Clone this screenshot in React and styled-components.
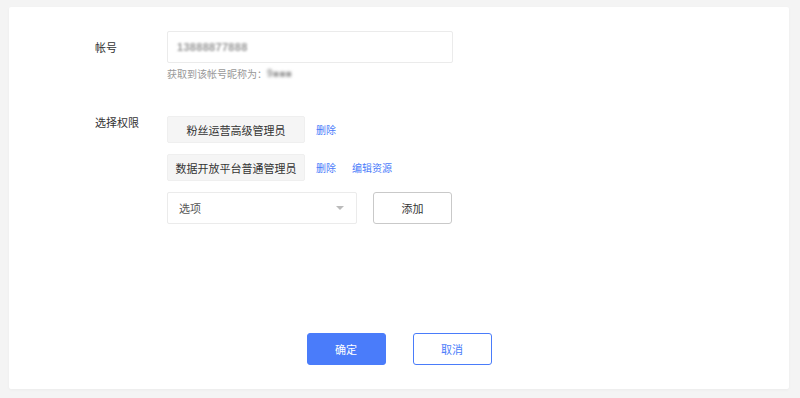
import React from "react"
import styled, { createGlobalStyle } from "styled-components"

const GlobalStyle = createGlobalStyle`
  html, body {
    margin: 0;
    padding: 0;
    background: #f4f4f4;
    font-family: "Noto Sans CJK SC", "Noto Sans", sans-serif;
  }
  * { box-sizing: border-box; }
`

const Page = styled.div`
  width: 800px;
  height: 398px;
  padding: 7px 11px 9px 9px;
`

const Card = styled.section`
  height: 382px;
  background: #fff;
  border-radius: 2px;
  box-shadow: 0 1px 3px rgba(0, 0, 0, 0.04);
  display: flex;
  flex-direction: column;
  padding: 24px 0 24px 86px;
`

const Row = styled.div`
  display: flex;
  align-items: flex-start;
  margin-bottom: ${(p) => p.gap || 0}px;
`

const Label = styled.div`
  width: 72px;
  flex: none;
  font-size: 11px;
  color: #333;
  line-height: ${(p) => p.lh || 12}px;
`

const Field = styled.div`
  display: flex;
  flex-direction: column;
`

const Input = styled.div`
  width: 286px;
  height: 32px;
  border: 1px solid #ebebeb;
  border-radius: 2px;
  display: flex;
  align-items: center;
  padding-left: 9px;
`

const Blurred = styled.span`
  display: inline-block;
  font-family: "Liberation Sans", sans-serif;
  font-weight: bold;
  font-size: ${(p) => p.size || 11}px;
  color: #9a9a9a;
  filter: blur(${(p) => p.blur || 1}px);
  letter-spacing: 0.3px;
`

const Hint = styled.div`
  margin-top: 4px;
  font-size: 10px;
  line-height: 14px;
  color: #999;
  display: flex;
  align-items: center;
`

const TagRow = styled.div`
  display: flex;
  align-items: center;
  margin-bottom: 11px;
`

const Tag = styled.div`
  width: 138px;
  height: 27px;
  background: #f5f5f5;
  border: 1px solid #efefef;
  border-radius: 2px;
  font-size: 11px;
  color: #333;
  display: flex;
  align-items: center;
  justify-content: center;
  white-space: nowrap;
`

const LinkText = styled.a`
  font-size: 10px;
  color: #4a7cfa;
  margin-left: ${(p) => p.ml || 11}px;
  cursor: pointer;
`

const Select = styled.div`
  width: 190px;
  height: 32px;
  border: 1px solid #ebebeb;
  border-radius: 2px;
  display: flex;
  align-items: center;
  justify-content: space-between;
  padding: 0 11px 0 11px;
  font-size: 11px;
  color: #555;
`

const Caret = styled.span`
  width: 0;
  height: 0;
  border-left: 4px solid transparent;
  border-right: 4px solid transparent;
  border-top: 4px solid #bbb;
  margin-right: 1px;
`

const AddButton = styled.button`
  margin-left: 16px;
  width: 79px;
  height: 32px;
  background: #fff;
  border: 1px solid #c9c9c9;
  border-radius: 3px;
  font-family: inherit;
  font-size: 11px;
  color: #333;
`

const Footer = styled.div`
  margin-top: auto;
  margin-left: -86px;
  display: flex;
  justify-content: center;
  gap: 27px;
`

const Button = styled.button`
  width: 79px;
  height: 32px;
  border-radius: 3px;
  font-family: inherit;
  font-size: 11px;
  border: 1px solid #4a7cfa;
  background: ${(p) => (p.primary ? "#4a7cfa" : "#fff")};
  color: ${(p) => (p.primary ? "#fff" : "#4a7cfa")};
`

export default function App() {
  return (
    <Page>
      <GlobalStyle />
      <Card>
        <Row gap={35}>
          <Label lh={32}>帐号</Label>
          <Field>
            <Input>
              <Blurred blur={1.3}>13888877888</Blurred>
            </Input>
            <Hint>
              获取到该帐号昵称为：
              <Blurred size={10} blur={1.4}>
                9■■■
              </Blurred>
            </Hint>
          </Field>
        </Row>
        <Row>
          <Label lh={12}>选择权限</Label>
          <Field>
            <TagRow>
              <Tag>粉丝运营高级管理员</Tag>
              <LinkText>删除</LinkText>
            </TagRow>
            <TagRow>
              <Tag>数据开放平台普通管理员</Tag>
              <LinkText>删除</LinkText>
              <LinkText ml={16}>编辑资源</LinkText>
            </TagRow>
            <TagRow>
              <Select>
                选项
                <Caret />
              </Select>
              <AddButton>添加</AddButton>
            </TagRow>
          </Field>
        </Row>
        <Footer>
          <Button primary>确定</Button>
          <Button>取消</Button>
        </Footer>
      </Card>
    </Page>
  )
}
